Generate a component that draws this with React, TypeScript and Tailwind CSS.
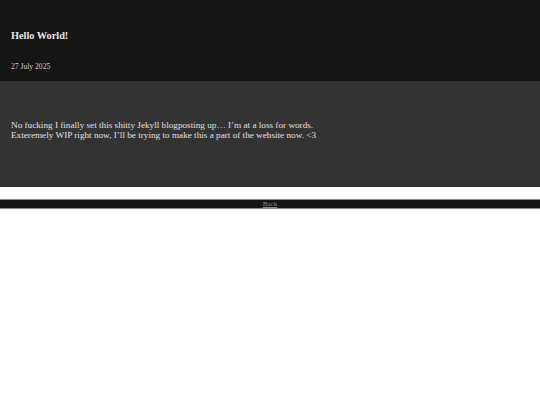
export default function App() {
  return (
    <div className="w-[540px] bg-white" style={{ fontFamily: '"Liberation Serif", serif' }}>
      <header className="h-[81px] bg-[#151515] px-[11px] pt-[30px] text-[#e6e6e6]">
        <h1 className="text-[10.3px] font-bold leading-[12px]">Hello World!</h1>
        <p className="mt-[20px] text-[7.6px] leading-[10px] text-[#d0d0d0]">27 July 2025</p>
      </header>
      <main className="h-[106px] bg-[#333333] px-[11px] pt-[40px] text-[9.2px] leading-[9.5px] text-[#e0e0e0]">
        <p>No fucking I finally set this shitty Jekyll blogposting up… I’m at a loss for words.</p>
        <p>Exteremely WIP right now, I’ll be trying to make this a part of the website now. &lt;3</p>
      </main>
      <div className="h-[12px]" />
      <footer className="flex h-[10px] items-center justify-center border-y border-[#8a8a8a] bg-[#151515]">
        <a href="#" className="text-[7px] leading-[8px] text-[#8a8a8a] underline">Back</a>
      </footer>
    </div>
  );
}
